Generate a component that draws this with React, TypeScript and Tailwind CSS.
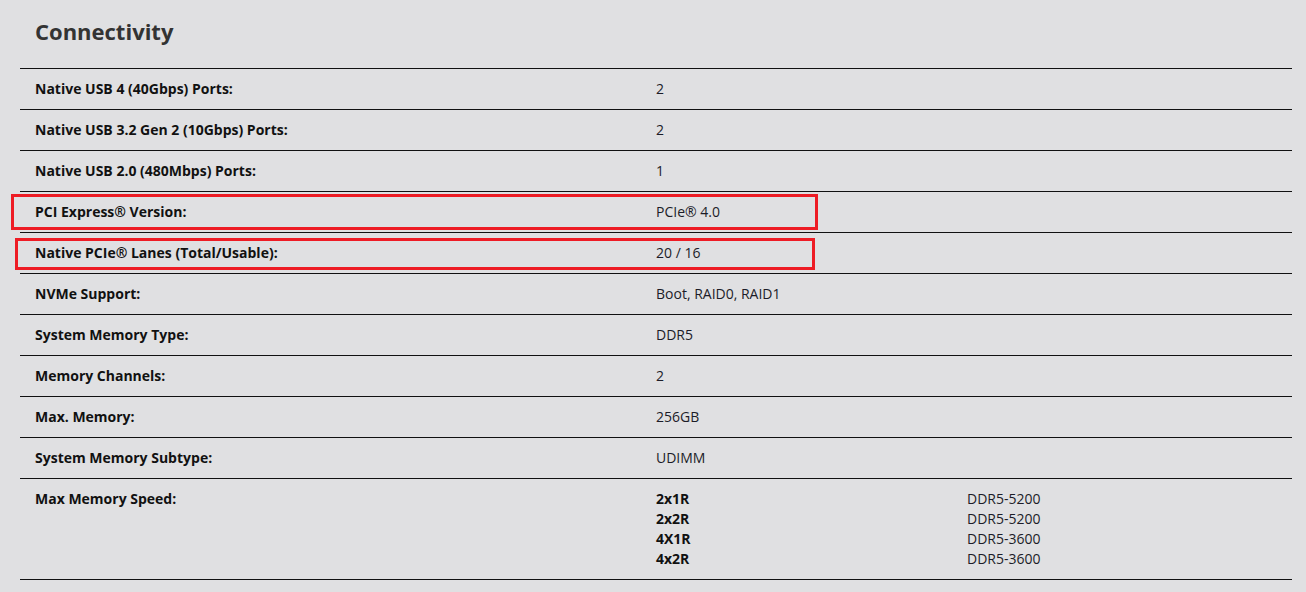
const rows: { label: string; value: string; mark?: 'a' | 'b' }[] = [
  { label: 'Native USB 4 (40Gbps) Ports:', value: '2' },
  { label: 'Native USB 3.2 Gen 2 (10Gbps) Ports:', value: '2' },
  { label: 'Native USB 2.0 (480Mbps) Ports:', value: '1' },
  { label: 'PCI Express® Version:', value: 'PCIe® 4.0', mark: 'a' },
  { label: 'Native PCIe® Lanes (Total/Usable):', value: '20 / 16', mark: 'b' },
  { label: 'NVMe Support:', value: 'Boot, RAID0, RAID1' },
  { label: 'System Memory Type:', value: 'DDR5' },
  { label: 'Memory Channels:', value: '2' },
  { label: 'Max. Memory:', value: '256GB' },
  { label: 'System Memory Subtype:', value: 'UDIMM' },
];

const speeds = [
  ['2x1R', 'DDR5-5200'],
  ['2x2R', 'DDR5-5200'],
  ['4X1R', 'DDR5-3600'],
  ['4x2R', 'DDR5-3600'],
];

export default function App() {
  return (
    <div className="min-h-[592px] bg-[#e0e0e2] pl-[20px] pr-[14px] pt-[16px] font-['Open_Sans',sans-serif] text-[14px] leading-[20px]">
      <h2 className="px-[15px] text-[22px] font-bold leading-[30px] text-[#333333]">Connectivity</h2>

      <div className="mt-[22px] border-t border-[#111]">
        {rows.map((r) => (
          <div key={r.label} className="relative grid grid-cols-[621px_1fr] border-b border-[#111] py-[10px]">
            <div className="pl-[15px] font-bold text-[#111]">{r.label}</div>
            <div className="pl-[15px] text-[#1c1c28]">{r.value}</div>
            {r.mark === 'a' && (
              <div className="absolute left-[-9px] top-[2px] h-[36px] w-[807px] border-[3px] border-[#ee1c25]" />
            )}
            {r.mark === 'b' && (
              <div className="absolute left-[-5px] top-[5px] h-[32px] w-[800px] border-[3px] border-[#ee1c25]" />
            )}
          </div>
        ))}

        <div className="grid grid-cols-[621px_1fr] border-b border-[#111] py-[10px]">
          <div className="pl-[15px] font-bold text-[#111]">Max Memory Speed:</div>
          <div className="pl-[15px]">
            {speeds.map(([k, v]) => (
              <div key={k} className="grid grid-cols-[311px_1fr]">
                <div className="font-bold text-[#111]">{k}</div>
                <div className="text-[#1c1c28]">{v}</div>
              </div>
            ))}
          </div>
        </div>
      </div>
    </div>
  );
}
